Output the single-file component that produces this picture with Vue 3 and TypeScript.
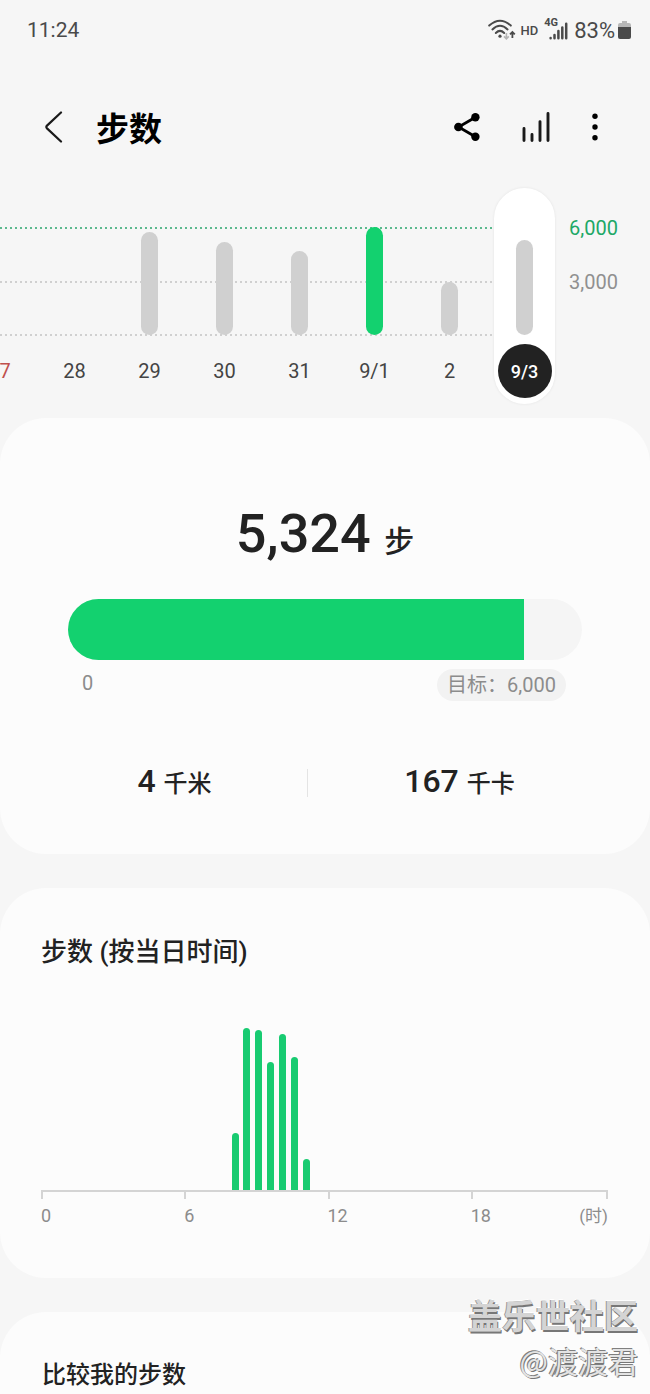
<script setup lang="ts">
interface Day {
  label: string
  steps: number
  sunday?: boolean
}

const GOAL = 6000
const today = 5324

const days: Day[] = [
  { label: '27', steps: 0, sunday: true },
  { label: '28', steps: 0 },
  { label: '29', steps: 5780 },
  { label: '30', steps: 5230 },
  { label: '31', steps: 4730 },
  { label: '9/1', steps: 6050 },
  { label: '2', steps: 3000 },
  { label: '9/3', steps: today },
]
const selected = '9/3'

const share = (steps: number) => `${(steps / GOAL) * 100}%`

// Relative activity per half hour, keyed by slot index (slot 16 = 08:00)
const activity: Record<number, number> = { 16: 35, 17: 100, 18: 99, 19: 79, 20: 96, 21: 82, 22: 19 }
const slots = Array.from({ length: 48 }, (_, i) => activity[i] ?? 0)
const hours = ['0', '6', '12', '18']
</script>

<template>
  <div class="screen">
    <div class="status">
      <span class="clock">11:24</span>
      <div class="indicators">
        <svg class="wifi" viewBox="0 0 28 22" width="28" height="22" aria-hidden="true">
          <g fill="none" stroke="#4a4a4a" stroke-width="2" stroke-linecap="round">
            <path d="M1.2 6.6 Q12 -3.2 22.8 6.6" />
            <path d="M4.4 10.4 Q12 3.2 19.6 10.4" />
            <path d="M7.8 14 Q12 9.8 16.2 14" />
          </g>
          <circle cx="12" cy="17.2" r="1.6" fill="#4a4a4a" />
          <path d="M18.4 14 V19.4 M16 17.4 L18.4 19.8 L20.8 17.4" fill="none" stroke="#b4b4b4" stroke-width="1.6" />
          <path d="M24.4 19 V13.2 M22 15.4 L24.4 13 L26.8 15.4" fill="none" stroke="#4a4a4a" stroke-width="1.8" />
        </svg>
        <span class="hd">HD</span>
        <span class="cell">
          <span class="net">4G</span>
          <svg viewBox="0 0 19 18" width="19" height="18" aria-hidden="true">
            <g stroke="#4a4a4a" stroke-width="2.5" stroke-linecap="round">
              <path d="M1.6 16 V16.2 M5.5 13 V16.2 M9.4 9 V16.2 M13.3 5.4 V16.2 M17.2 1.8 V16.2" />
            </g>
          </svg>
        </span>
        <span class="percent">83%</span>
        <svg viewBox="0 0 13 20" width="13" height="20" aria-hidden="true">
          <path d="M4 1 H9 V3 H11 Q13 3 13 5 V7 H0 V5 Q0 3 2 3 H4 Z" fill="#b8b8b8" />
          <path d="M0 7 H13 V17 Q13 19 11 19 H2 Q0 19 0 17 Z" fill="#4a4a4a" />
        </svg>
      </div>
    </div>

    <header class="appbar">
      <button type="button" aria-label="返回">
        <svg viewBox="0 0 20 32" width="20" height="32">
          <path d="M17 1.5 L3 14.6 Q1.6 16 3 17.4 L17 30.5" fill="none" stroke="#1a1a1a" stroke-width="2.2" stroke-linecap="round" />
        </svg>
      </button>
      <h1>步数</h1>
      <div class="actions">
        <button type="button" aria-label="分享">
          <svg viewBox="0 0 26 28" width="26" height="28">
            <path d="M21.4 4.2 L4.6 14 L21.4 23.8" fill="none" stroke="#000" stroke-width="2.8" />
            <circle cx="21.4" cy="4.2" r="4.2" />
            <circle cx="4.4" cy="14" r="4.3" />
            <circle cx="21.4" cy="23.8" r="4.2" />
          </svg>
        </button>
        <button type="button" aria-label="图表">
          <svg viewBox="0 0 28 32" width="28" height="32">
            <path d="M2 17.4 V29.6 M10 23.4 V29.6 M18 10.6 V29.6 M26 2.4 V29.6" stroke="#1a1a1a" stroke-width="2.9" stroke-linecap="round" />
          </svg>
        </button>
        <button type="button" aria-label="更多">
          <svg viewBox="0 0 6 28" width="6" height="28">
            <circle cx="3" cy="3.2" r="2.7" />
            <circle cx="3" cy="14" r="2.7" />
            <circle cx="3" cy="24.8" r="2.7" />
          </svg>
        </button>
      </div>
    </header>

    <section class="week">
      <div class="days">
        <svg class="grid" width="100%" height="110" aria-hidden="true">
          <g stroke-width="2" stroke-dasharray="2 3">
            <line x1="0" x2="100%" y1="1" y2="1" stroke="#5cb98e" />
            <line x1="0" x2="100%" y1="55" y2="55" stroke="#d0d0d0" />
            <line x1="0" x2="100%" y1="108" y2="108" stroke="#d0d0d0" />
          </g>
        </svg>
        <button
          v-for="day in days"
          :key="day.label"
          type="button"
          class="day"
          :class="{ sunday: day.sunday, selected: day.label === selected }"
        >
          <span class="plot">
            <span class="bar" :class="{ reached: day.steps >= GOAL }" :style="{ height: share(day.steps) }"></span>
          </span>
          <span class="date">{{ day.label }}</span>
        </button>
      </div>
      <div class="scale">
        <span class="goal-mark">6,000</span>
        <span>3,000</span>
      </div>
    </section>

    <main>
      <section class="card summary">
        <p class="total">5,324 <small>步</small></p>
        <div class="progress" role="progressbar" aria-label="步数" :aria-valuenow="today" aria-valuemin="0" :aria-valuemax="GOAL">
          <div class="fill" :style="{ width: share(today) }"></div>
        </div>
        <div class="range">
          <span>0</span>
          <button type="button" class="goal">目标：6,000</button>
        </div>
        <div class="stats">
          <p>4 <small>千米</small></p>
          <p>167 <small>千卡</small></p>
        </div>
      </section>

      <section class="card hourly">
        <h2>步数 (按当日时间)</h2>
        <div class="slots">
          <span v-for="(value, i) in slots" :key="i" class="slot" :style="{ height: `${value}%` }"></span>
        </div>
        <div class="axis">
          <div v-for="hour in hours" :key="hour" class="tick">
            <span>{{ hour }}</span>
            <span v-if="hour === '18'" class="unit">(时)</span>
          </div>
        </div>
      </section>

      <section class="card compare">
        <h2>比较我的步数</h2>
      </section>
    </main>

    <div class="watermark">
      <strong>盖乐世社区</strong>
      <span>@渡渡君</span>
    </div>
  </div>
</template>

<style>
body {
  margin: 0;
  background: #f6f6f6;
}
</style>

<style scoped>
.screen {
  position: relative;
  display: flex;
  flex-direction: column;
  min-height: 100vh;
  overflow: hidden;
  box-sizing: border-box;
  background: #f6f6f6;
  color: #222;
  font-family: Roboto, "Noto Sans CJK SC", sans-serif;
}
button {
  padding: 0;
  border: 0;
  background: none;
  color: inherit;
  font: inherit;
}
svg {
  display: block;
}
h1, h2, p {
  margin: 0;
}

.status {
  display: flex;
  align-items: center;
  justify-content: space-between;
  height: 60px;
  padding: 0 19px 0 27px;
  color: #4a4a4a;
  font-size: 22px;
}
.clock {
  font-size: 21px;
}
.indicators {
  display: flex;
  align-items: center;
}
.hd {
  margin: 0 6px 0 4px;
  font-size: 13px;
  font-weight: 500;
}
.cell {
  position: relative;
  padding: 2px 6px 0 5px;
}
.net {
  position: absolute;
  top: -4px;
  left: 0;
  font-size: 11px;
  font-weight: 700;
}
.percent {
  margin-right: 3px;
}

.appbar {
  display: flex;
  align-items: center;
  height: 128px;
  padding: 6px 52px 0 44px;
  box-sizing: border-box;
}
.appbar h1 {
  margin-left: 32px;
  padding-top: 6px;
  color: #000;
  font-size: 33px;
  line-height: 40px;
  font-weight: 700;
}
.actions {
  display: flex;
  align-items: center;
  gap: 42px;
  margin-left: auto;
}

.week {
  display: flex;
  height: 216px;
}
.days {
  position: relative;
  display: flex;
  flex: 1;
  gap: 14px;
  justify-content: flex-end;
  min-width: 0;
}
.grid {
  position: absolute;
  top: 39px;
  left: 0;
}
.day {
  position: relative;
  display: flex;
  flex: none;
  flex-direction: column;
  align-items: center;
  width: 61px;
  border-radius: 31px;
  color: #444;
  font-size: 20px;
}
.plot {
  display: flex;
  align-items: flex-end;
  height: 107px;
  margin-top: 40px;
}
.bar {
  width: 17px;
  border-radius: 9px;
  background: #d0d0d0;
}
.bar.reached {
  background: #13d16f;
}
.date {
  display: flex;
  align-items: center;
  justify-content: center;
  width: 54px;
  height: 54px;
  margin-top: 9px;
  border-radius: 50%;
}
.sunday {
  color: #c0504d;
}
.selected {
  background: #fff;
  box-shadow: 0 0 3px #00000014;
}
.selected .date {
  background: #222;
  color: #fff;
  font-size: 18px;
  font-weight: 500;
}
.scale {
  display: flex;
  flex-direction: column;
  gap: 30px;
  width: 95px;
  padding: 28px 0 0 14px;
  box-sizing: border-box;
  color: #909090;
  font-size: 20px;
  line-height: 24px;
}
.goal-mark {
  color: #20a866;
}

main {
  display: flex;
  flex: 1;
  flex-direction: column;
  gap: 34px;
  margin-top: 14px;
}
.card {
  border-radius: 46px;
  background: #fcfcfc;
}
.card h2 {
  font-size: 26px;
  line-height: 38px;
  font-weight: 500;
}
.summary {
  padding: 84px 0 50px;
}
.total {
  font-size: 54px;
  line-height: 64px;
  font-weight: 500;
  text-align: center;
}
.total small {
  font-size: 30px;
  line-height: 30px;
}
.progress {
  height: 61px;
  margin: 33px 68px 0;
  overflow: hidden;
  border-radius: 31px;
  background: #f5f5f5;
}
.fill {
  height: 100%;
  background: #13d16f;
}
.range {
  display: flex;
  justify-content: space-between;
  margin: 9px 84px 0 82px;
  color: #8c8c8c;
  font-size: 20px;
  line-height: 28px;
}
.goal {
  height: 32px;
  padding: 0 10px;
  border-radius: 16px;
  background: #f2f2f2;
}
.stats {
  display: grid;
  grid-template-columns: 265fr 305fr;
  margin: 60px 38px 0 42px;
}
.stats p {
  font-size: 32px;
  line-height: 40px;
  font-weight: 500;
  text-align: center;
}
.stats p + p {
  background: linear-gradient(#e4e4e4, #e4e4e4) left center / 1px 28px no-repeat;
}
.stats small {
  font-size: 24px;
}

.hourly {
  padding: 45px 42px 50px 41px;
}
.slots {
  display: flex;
  align-items: flex-end;
  justify-content: space-between;
  height: 162px;
  margin-top: 57px;
}
.slot {
  width: 7px;
  border-radius: 4px 4px 0 0;
  background: #18cb71;
}
.axis {
  display: grid;
  grid-template-columns: 143fr 143fr 143fr 137fr;
  border-top: 2px solid #d4d4d4;
}
.tick {
  display: flex;
  justify-content: space-between;
  padding-top: 12px;
  background: linear-gradient(#d4d4d4, #d4d4d4) left top / 2px 7px no-repeat;
  color: #8c8c8c;
  font-size: 18px;
  line-height: 24px;
}
.tick:last-child {
  background:
    linear-gradient(#d4d4d4, #d4d4d4) left top / 2px 7px no-repeat,
    linear-gradient(#d4d4d4, #d4d4d4) right top / 2px 7px no-repeat;
}
.unit {
  font-size: 17px;
}

.compare {
  flex: 1;
  padding: 44px 42px 0;
  border-radius: 46px 46px 0 0;
}
.compare h2 {
  font-size: 24px;
}

.watermark {
  position: absolute;
  right: 12px;
  bottom: 12px;
  display: flex;
  flex-direction: column;
  align-items: flex-end;
  font-family: "Noto Sans CJK SC", sans-serif;
}
.watermark strong {
  color: #d4d4d4;
  font-size: 34px;
  line-height: 46px;
  text-shadow: 1px 2px 0 #777, -1px 0 0 #999, -1px -1px 0 #fff;
}
.watermark span {
  color: #e4e4e4;
  font-size: 30px;
  line-height: 44px;
  text-shadow: -1px -1px 0 #808080, 1px 1px 0 #777;
}
</style>
